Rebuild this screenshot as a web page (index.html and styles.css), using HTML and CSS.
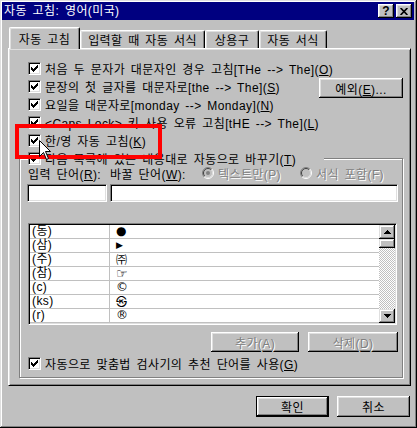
FILE: index.html
```html
<!DOCTYPE html>
<html lang="ko">
<head>
    <meta charset="UTF-8">
    <title>자동 고침: 영어(미국)</title>
    <link rel="stylesheet" href="styles.css">
</head>
<body>
<svg class="defs" width="0" height="0">
    <symbol id="tick" viewBox="0 0 7 7">
        <path d="M6 0h1v1h-1z M5 1h2v1h-2z M0 2h1v1h-1z M4 2h3v1h-3z M0 3h2v1h-2z M3 3h3v1h-3z M0 4h5v1h-5z M1 5h3v1h-3z M2 6h1v1h-1z" fill="#000"/>
    </symbol>
</svg>
<div class="window">
    <div class="titlebar">
        <span class="title">자동 고침: 영어(미국)</span>
        <div class="title-btns">
            <span class="tbtn help">?</span>
            <span class="tbtn"><svg width="8" height="7" viewBox="0 0 8 7"><path d="M0.6 0 L7.4 7 M7.4 0 L0.6 7" stroke="#000" stroke-width="1.7"/></svg></span>
        </div>
    </div>

    <div class="dialog">
        <div class="tabs">
            <div class="tab active tab-correct">자동 고침</div>
            <div class="tab tab-typing">입력할 때 자동 서식</div>
            <div class="tab tab-text">상용구</div>
            <div class="tab tab-format">자동 서식</div>
        </div>

        <div class="panel">
            <div class="opts">
                <label class="chk"><span class="box"><svg class="tick"><use href="#tick"/></svg></span><span>처음 두 문자가 대문자인 경우 고침[THe --&gt; The](<u>O</u>)</span></label>
                <div class="opts-mid">
                    <div>
                        <label class="chk"><span class="box"><svg class="tick"><use href="#tick"/></svg></span><span>문장의 첫 글자를 대문자로[the --&gt; The](<u>S</u>)</span></label>
                        <label class="chk"><span class="box"><svg class="tick"><use href="#tick"/></svg></span><span>요일을 대문자로[monday --&gt; Monday](<u>N</u>)</span></label>
                        <label class="chk"><span class="box"><svg class="tick"><use href="#tick"/></svg></span><span>&lt;Caps Lock&gt; 키 사용 오류 고침[tHE --&gt; The](<u>L</u>)</span></label>
                    </div>
                    <button class="btn btn-except">예외(<u>E</u>)...</button>
                </div>
                <label class="chk"><span class="box"><svg class="tick"><use href="#tick"/></svg></span><span>한/영 자동 고침(<u>K</u>)</span></label>
            </div>

            <fieldset class="group">
                <legend class="chk"><span class="box"><svg class="tick"><use href="#tick"/></svg></span><span>다음 목록에 있는 내용대로 자동으로 바꾸기(<u>T</u>)</span></legend>

                <div class="fields-head">
                    <span class="lbl-from">입력 단어(<u>R</u>):</span>
                    <span class="lbl-to">바꿀 단어(<u>W</u>):</span>
                    <span class="radio radio-plain">
                        <svg width="12" height="12" viewBox="0 0 12 12">
                            <circle cx="6" cy="6" r="5.5" fill="#c0c0c0"/>
                            <path d="M2.1 9.9 A5.5 5.5 0 0 1 9.9 2.1" stroke="#808080" fill="none"/>
                            <path d="M9.9 2.1 A5.5 5.5 0 0 1 2.1 9.9" stroke="#fff" fill="none"/>
                            <path d="M2.8 9.2 A4.5 4.5 0 0 1 9.2 2.8" stroke="#404040" fill="none"/>
                            <path d="M9.2 2.8 A4.5 4.5 0 0 1 2.8 9.2" stroke="#dfdfdf" fill="none"/>
                            <circle cx="6" cy="6" r="2" fill="#808080"/>
                        </svg>
                        <span class="disabled">텍스트만(P)</span>
                    </span>
                    <span class="radio">
                        <svg width="12" height="12" viewBox="0 0 12 12">
                            <circle cx="6" cy="6" r="5.5" fill="#c0c0c0"/>
                            <path d="M2.1 9.9 A5.5 5.5 0 0 1 9.9 2.1" stroke="#808080" fill="none"/>
                            <path d="M9.9 2.1 A5.5 5.5 0 0 1 2.1 9.9" stroke="#fff" fill="none"/>
                            <path d="M2.8 9.2 A4.5 4.5 0 0 1 9.2 2.8" stroke="#404040" fill="none"/>
                            <path d="M9.2 2.8 A4.5 4.5 0 0 1 2.8 9.2" stroke="#dfdfdf" fill="none"/>
                        </svg>
                        <span class="disabled">서식 포함(F)</span>
                    </span>
                </div>

                <div class="fields">
                    <div class="field field-from"></div>
                    <div class="field field-to"></div>
                </div>

                <div class="list">
                    <div class="rows">
                        <div class="row"><span class="c1">(동)</span><span class="c2 dot">●</span></div>
                        <div class="row"><span class="c1">(삼)</span><span class="c2 tri">▶</span></div>
                        <div class="row"><span class="c1">(주)</span><span class="c2 cjk">㈜</span></div>
                        <div class="row"><span class="c1">(참)</span><span class="c2 hand">☞</span></div>
                        <div class="row"><span class="c1">(c)</span><span class="c2">©</span></div>
                        <div class="row"><span class="c1">(ks)</span><span class="c2 cjk">㉿</span></div>
                        <div class="row"><span class="c1">(r)</span><span class="c2">®</span></div>
                    </div>
                    <div class="scrollbar">
                        <div class="sbtn"><svg width="7" height="4" viewBox="0 0 7 4"><path d="M3 0h1v1h-1z M2 1h3v1h-3z M1 2h5v1h-5z M0 3h7v1h-7z" fill="#000"/></svg></div>
                        <div class="thumb"></div>
                        <div class="track"></div>
                        <div class="sbtn"><svg width="7" height="4" viewBox="0 0 7 4"><path d="M0 0h7v1h-7z M1 1h5v1h-5z M2 2h3v1h-3z M3 3h1v1h-1z" fill="#000"/></svg></div>
                    </div>
                </div>

                <div class="list-btns">
                    <button class="btn btn-add disabled">추가(A)</button>
                    <button class="btn btn-del disabled">삭제(D)</button>
                </div>

                <label class="chk"><span class="box"><svg class="tick"><use href="#tick"/></svg></span><span>자동으로 맞춤법 검사기의 추천 단어를 사용(<u>G</u>)</span></label>
            </fieldset>
        </div>

        <div class="footer">
            <button class="btn btn-ok default">확인</button>
            <button class="btn btn-cancel">취소</button>
        </div>
    </div>

    <!-- annotation overlay -->
    <div class="highlight"></div>
    <svg class="cursor" width="13" height="21" viewBox="0 0 13 21">
        <path d="M0.5 0.5 V16.5 L4.5 12.5 L7.5 19.5 L9.5 18.5 L6.5 11.5 H11.5 Z" fill="#fff" stroke="#000"/>
    </svg>
</div>
</body>
</html>
```

FILE: styles.css
```css
* {
    box-sizing: border-box;
}
body {
    margin: 0;
    background: #c0c0c0;
    font-family: "Liberation Sans", "Noto Sans CJK KR", sans-serif;
    font-size: 12px;
    letter-spacing: 0.4px;
    word-spacing: 2px;
    color: #000;
}
.defs {
    position: absolute;
    width: 0;
    height: 0;
}
u {
    text-underline-offset: 1px;
}

/* window frame */
.window {
    position: relative;
    width: 417px;
    height: 428px;
    background: #c0c0c0;
    padding: 2px 3px 3px 2px;
    box-shadow: inset -1px -1px #000, inset 1px 1px #dfdfdf, inset -2px -2px #808080, inset 2px 2px #fff;
}
.titlebar {
    height: 18px;
    background: #000080;
    color: #fff;
    display: flex;
    align-items: center;
    justify-content: space-between;
    padding: 0 2px 0 2px;
}
.title {
    line-height: 18px;
}
.title-btns {
    display: flex;
    gap: 2px;
}
.tbtn {
    width: 16px;
    height: 14px;
    background: #c0c0c0;
    display: flex;
    align-items: center;
    justify-content: center;
    box-shadow: inset -1px -1px #000, inset 1px 1px #fff, inset -2px -2px #808080, inset 2px 2px #dfdfdf;
}
.tbtn.help {
    color: #000;
    font-weight: bold;
    font-size: 12px;
    line-height: 14px;
    letter-spacing: 0;
}

/* dialog body */
.dialog {
    padding: 7px 3px 0 6px;
}
.tabs {
    position: relative;
    z-index: 1;
    display: flex;
    align-items: flex-end;
    height: 22px;
    margin-bottom: -1px;
    padding-left: 1px;
}
.tab {
    height: 18px;
    margin-bottom: 1px;
    display: flex;
    align-items: center;
    justify-content: center;
    background: #c0c0c0;
    border-top: 1px solid #fff;
    border-left: 1px solid #fff;
    border-right: 1px solid #000;
    border-radius: 2px 2px 0 0;
    box-shadow: inset -1px 0 #808080, inset 1px 1px #dfdfdf;
}
.tab.active {
    height: 22px;
    margin-bottom: 0;
    padding-bottom: 1px;
}
.tab-correct { width: 71px; }
.tab-typing { width: 125px; }
.tab-text { width: 54px; }
.tab-format { width: 68px; }

.panel {
    width: 403px;
    height: 338px;
    border: 1px solid;
    border-color: #fff #000 #000 #fff;
    box-shadow: inset 1px 1px #dfdfdf, inset -1px -1px #808080;
    padding: 10px 7px 0 10px;
}
.opts {
    padding-left: 9px;
}
.opts-mid {
    display: flex;
    justify-content: space-between;
    align-items: flex-start;
}
.chk {
    display: flex;
    align-items: center;
    gap: 4px;
    height: 18px;
    white-space: nowrap;
}
.box {
    width: 13px;
    height: 13px;
    flex: none;
    background: #fff;
    border: 1px solid;
    border-color: #808080 #fff #fff #808080;
    box-shadow: inset 1px 1px #000, inset -1px -1px #dfdfdf;
    display: flex;
    align-items: center;
    justify-content: center;
}
.tick {
    width: 7px;
    height: 7px;
    shape-rendering: crispEdges;
}

/* buttons */
.btn {
    font: inherit;
    letter-spacing: inherit;
    word-spacing: inherit;
    color: #000;
    background: #c0c0c0;
    border: 0;
    padding: 0;
    box-shadow: inset -1px -1px #000, inset 1px 1px #fff, inset -2px -2px #808080, inset 2px 2px #dfdfdf;
}
.btn.default {
    border: 1px solid #000;
}
.btn.disabled, .disabled {
    color: #808080;
    text-shadow: 1px 1px #fff;
}
.btn-except {
    width: 88px;
    height: 20px;
    margin-top: 1px;
}

/* replace group */
.group {
    margin: 0;
    padding: 0 0 5px 8px;
    border: 1px solid #808080;
    box-shadow: inset 1px 1px #fff, 1px 1px #fff;
}
.group legend {
    width: 296px;
    padding: 0;
    background: #c0c0c0;
}
.fields-head {
    display: flex;
    align-items: center;
    height: 12px;
    white-space: nowrap;
}
.lbl-from { width: 82px; }
.lbl-to { width: 92px; }
.radio {
    display: flex;
    align-items: center;
    gap: 4px;
}
.radio-plain {
    width: 98px;
}
.fields {
    display: flex;
    gap: 3px;
    margin-top: 5px;
    margin-left: -1px;
}
.field {
    height: 18px;
    background: #fff;
    border: 1px solid;
    border-color: #808080 #fff #fff #808080;
    box-shadow: inset 1px 1px #000, inset -1px -1px #dfdfdf;
}
.field-from { width: 80px; }
.field-to { width: 288px; }

.list {
    display: flex;
    width: 369px;
    height: 102px;
    margin-top: 21px;
    background: #fff;
    border: 1px solid;
    border-color: #808080 #fff #fff #808080;
    box-shadow: inset 1px 1px #000, inset -1px -1px #dfdfdf;
    padding: 1px;
}
.rows {
    flex: 1;
}
.row {
    display: flex;
    height: 14px;
    line-height: 13px;
    border-bottom: 1px solid #c0c0c0;
}
.c1 {
    width: 80px;
    padding-left: 2px;
    border-right: 1px solid #c0c0c0;
}
.c2 {
    padding-left: 6px;
    font-family: "DejaVu Sans", "Noto Sans CJK KR", sans-serif;
    font-size: 12px;
}
.c2.cjk {
    font-family: "Noto Sans CJK KR", sans-serif;
    font-size: 11px;
}
.c2.dot {
    font-size: 12px;
}
.c2.tri {
    font-size: 9px;
}
.c2.hand {
    font-size: 13px;
}
.scrollbar {
    width: 16px;
    display: flex;
    flex-direction: column;
}
.sbtn, .thumb {
    background: #c0c0c0;
    box-shadow: inset -1px -1px #000, inset 1px 1px #dfdfdf, inset -2px -2px #808080, inset 2px 2px #fff;
}
.sbtn {
    height: 14px;
    display: flex;
    align-items: center;
    justify-content: center;
}
.sbtn svg {
    shape-rendering: crispEdges;
}
.thumb {
    height: 9px;
}
.track {
    flex: 1;
    background: repeating-conic-gradient(#c0c0c0 0 25%, #fff 0 50%) 0 0 / 2px 2px;
}
.list-btns {
    display: flex;
    justify-content: flex-end;
    gap: 9px;
    margin-top: 7px;
    padding-right: 4px;
}
.list-btns .btn {
    height: 20px;
}
.btn-add { width: 88px; }
.btn-del { width: 90px; }
.group > .chk {
    margin-top: 2px;
}

/* footer */
.footer {
    display: flex;
    justify-content: flex-end;
    gap: 8px;
    margin-top: 10px;
    padding-right: 1px;
}
.footer .btn {
    width: 73px;
    height: 21px;
}

/* annotation */
.highlight {
    position: absolute;
    left: 15px;
    top: 124px;
    width: 147px;
    height: 35px;
    border: 4px solid #f00;
    z-index: 5;
}
.cursor {
    position: absolute;
    left: 39px;
    top: 140px;
    z-index: 6;
}
```
